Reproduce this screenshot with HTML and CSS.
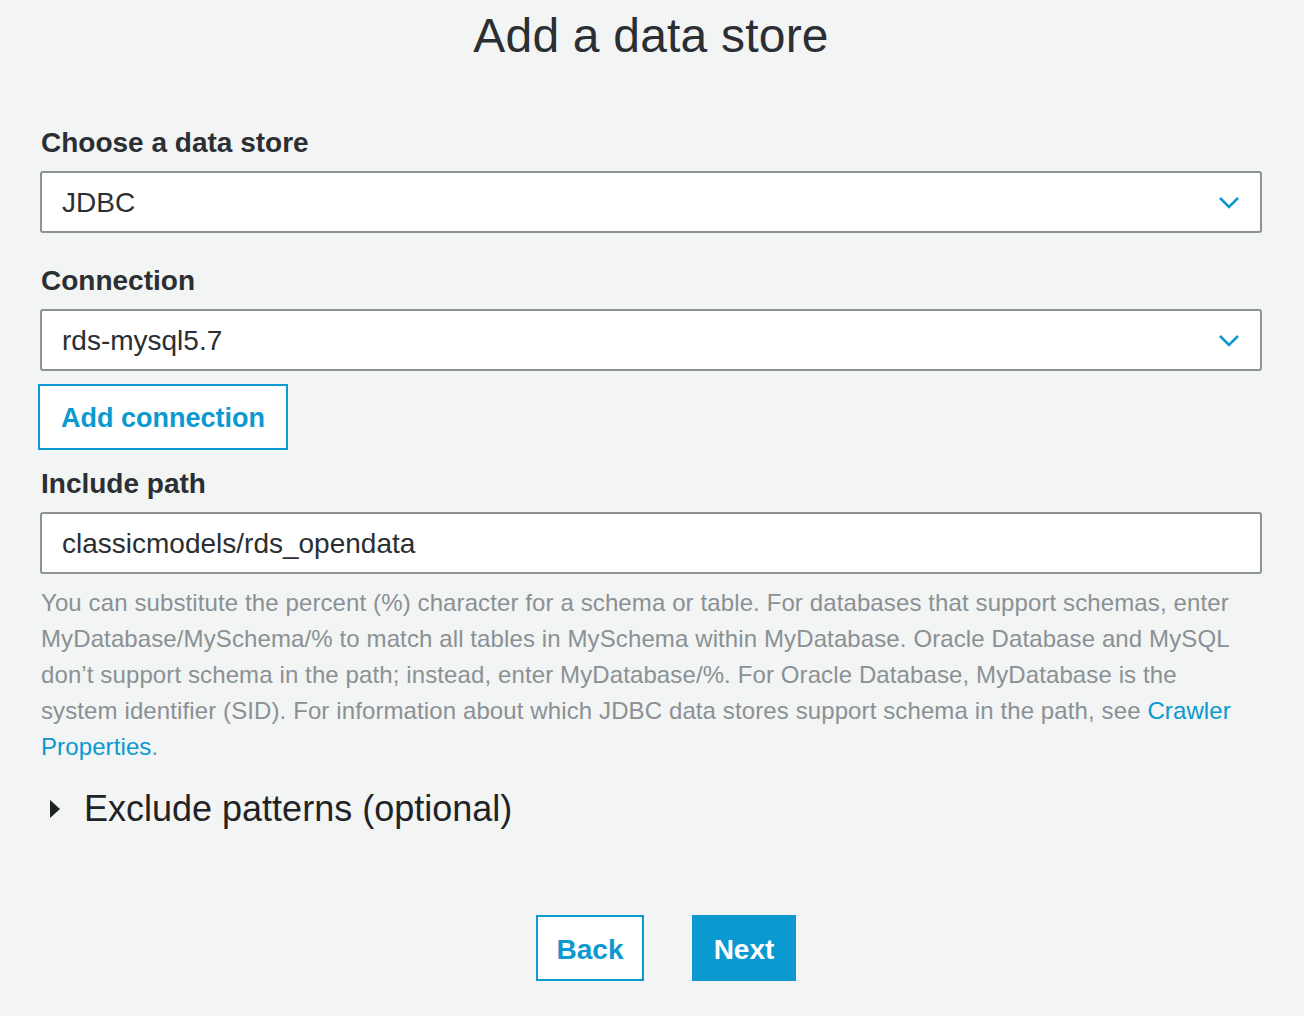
FILE: index.html
```html
<!DOCTYPE html>
<html lang="en">
<head>
<meta charset="utf-8">
<title>Add a data store</title>
<link rel="stylesheet" href="styles.css">
</head>
<body>
<main class="page">
  <h1 class="title">Add a data store</h1>

  <div class="field">
    <label class="label">Choose a data store</label>
    <div class="select">
      <span class="value">JDBC</span>
      <svg class="chev" width="22" height="14" viewBox="0 0 22 14"><path d="M2 2 L11 11 L20 2" fill="none" stroke="#0a99d0" stroke-width="2.6"/></svg>
    </div>
  </div>

  <div class="field">
    <label class="label">Connection</label>
    <div class="select">
      <span class="value">rds-mysql5.7</span>
      <svg class="chev" width="22" height="14" viewBox="0 0 22 14"><path d="M2 2 L11 11 L20 2" fill="none" stroke="#0a99d0" stroke-width="2.6"/></svg>
    </div>
  </div>

  <button class="btn btn-outline add-conn">Add connection</button>

  <div class="field field-path">
    <label class="label">Include path</label>
    <div class="input"><span class="value">classicmodels/rds_opendata</span></div>
  </div>

  <p class="help">You can substitute the percent (%) character for a schema or table. For databases that support schemas, enter MyDatabase/MySchema/% to match all tables in MySchema within MyDatabase. Oracle Database and MySQL don’t support schema in the path; instead, enter MyDatabase/%. For Oracle Database, MyDatabase is the system identifier (SID). For information about which JDBC data stores support schema in the path, see <a class="link" href="#">Crawler Properties</a>.</p>

  <div class="expander">
    <span class="tri"></span>
    <span class="exp-text">Exclude patterns (optional)</span>
  </div>

  <div class="actions">
    <button class="btn btn-outline back">Back</button>
    <button class="btn btn-primary next">Next</button>
  </div>
</main>
</body>
</html>
```

FILE: styles.css
```css
html, body {
  margin: 0;
  padding: 0;
  background: #f3f4f4;
}
body {
  font-family: "Liberation Sans", Arial, Helvetica, sans-serif;
  color: #2b2f33;
}
.page {
  padding: 8px 42px 0 40px;
  width: 1222px;
  display: flex;
  flex-direction: column;
}
.title {
  margin: 0;
  font-size: 48px;
  line-height: 56px;
  font-weight: normal;
  text-align: center;
  color: #2b2f33;
  letter-spacing: 0.2px;
}
.field {
  display: flex;
  flex-direction: column;
  gap: 12px;
}
.field:first-of-type { margin-top: 63px; }
.field + .field { margin-top: 32px; }
.label {
  font-size: 28px;
  line-height: 32px;
  font-weight: bold;
  color: #2b2f33;
  padding-left: 1px;
}
.select, .input {
  box-sizing: border-box;
  height: 62px;
  border: 2px solid #8d9395;
  border-radius: 3px;
  background: #fff;
  display: flex;
  align-items: center;
  justify-content: space-between;
  padding: 2px 20px 0 20px;
}
.value {
  font-size: 28px;
  color: #2b2f33;
}
.btn {
  font-family: "Liberation Sans", Arial, Helvetica, sans-serif;
  font-size: 28px;
  font-weight: bold;
  box-sizing: border-box;
  height: 66px;
  cursor: pointer;
  border-radius: 0;
  padding-top: 4px;
}
.btn-outline {
  background: #fff;
  border: 2px solid #0a99d0;
  color: #0a99d0;
}
.btn-primary {
  background: #0a99d0;
  border: 2px solid #0a99d0;
  color: #fff;
}
.add-conn {
  align-self: flex-start;
  margin-top: 13px;
  margin-left: -2px;
  width: 250px;
  font-size: 27px;
}
.field-path { margin-top: 18px; }
.help {
  margin: 11px 20px 0 1px;
  font-size: 24px;
  line-height: 36px;
  color: #8a9194;
  letter-spacing: 0.11px;
}
.link { color: #0a99d0; text-decoration: none; }
.expander {
  margin-top: 22px;
  display: flex;
  align-items: center;
  gap: 24px;
  height: 44px;
}
.tri {
  margin-left: 10px;
  width: 0;
  height: 0;
  border-top: 9px solid transparent;
  border-bottom: 9px solid transparent;
  border-left: 10px solid #1f2326;
}
.exp-text {
  font-size: 36px;
  line-height: 44px;
  color: #1f2326;
}
.actions {
  margin-top: 84px;
  display: flex;
  justify-content: center;
  gap: 48px;
  padding-left: 30px;
}
.back { width: 108px; }
.next { width: 104px; }
```
